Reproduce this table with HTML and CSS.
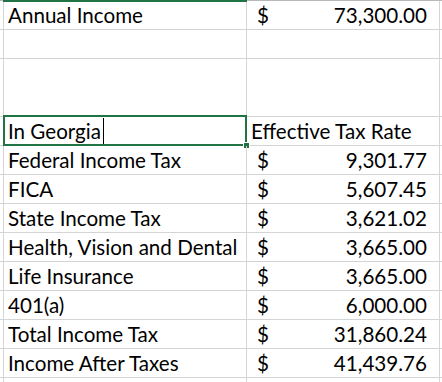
FILE: index.html
```
<!DOCTYPE html>
<html>
<head>
<meta charset="utf-8">
<link rel="stylesheet" href="styles.css">
</head>
<body>
<div class="sheet">
  <div class="row">
    <div class="stub"></div>
    <div class="cell label top-sel">Annual Income</div>
    <div class="cell money"><span class="cur">$</span><span class="num">73,300.00</span></div>
    <div class="rest"></div>
  </div>
  <div class="row">
    <div class="stub"></div><div class="cell label"></div><div class="cell money"></div><div class="rest"></div>
  </div>
  <div class="row tall">
    <div class="stub"></div><div class="cell label"></div><div class="cell money"></div><div class="rest"></div>
  </div>
  <div class="row">
    <div class="stub"></div>
    <div class="cell label active">In Georgia<span class="caret"></span><span class="selbox"><span class="handle"></span></span></div>
    <div class="cell heading">Effective Tax Rate</div>
    <div class="rest"></div>
  </div>
  <div class="row">
    <div class="stub"></div>
    <div class="cell label">Federal Income Tax</div>
    <div class="cell money"><span class="cur">$</span><span class="num">9,301.77</span></div>
    <div class="rest"></div>
  </div>
  <div class="row">
    <div class="stub"></div>
    <div class="cell label">FICA</div>
    <div class="cell money"><span class="cur">$</span><span class="num">5,607.45</span></div>
    <div class="rest"></div>
  </div>
  <div class="row">
    <div class="stub"></div>
    <div class="cell label">State Income Tax</div>
    <div class="cell money"><span class="cur">$</span><span class="num">3,621.02</span></div>
    <div class="rest"></div>
  </div>
  <div class="row">
    <div class="stub"></div>
    <div class="cell label">Health, Vision and Dental</div>
    <div class="cell money"><span class="cur">$</span><span class="num">3,665.00</span></div>
    <div class="rest"></div>
  </div>
  <div class="row">
    <div class="stub"></div>
    <div class="cell label">Life Insurance</div>
    <div class="cell money"><span class="cur">$</span><span class="num">3,665.00</span></div>
    <div class="rest"></div>
  </div>
  <div class="row">
    <div class="stub"></div>
    <div class="cell label">401(a)</div>
    <div class="cell money"><span class="cur">$</span><span class="num">6,000.00</span></div>
    <div class="rest"></div>
  </div>
  <div class="row">
    <div class="stub"></div>
    <div class="cell label">Total Income Tax</div>
    <div class="cell money"><span class="cur">$</span><span class="num">31,860.24</span></div>
    <div class="rest"></div>
  </div>
  <div class="row">
    <div class="stub"></div>
    <div class="cell label">Income After Taxes</div>
    <div class="cell money"><span class="cur">$</span><span class="num">41,439.76</span></div>
    <div class="rest"></div>
  </div>
  <div class="row tail">
    <div class="stub"></div><div class="cell label"></div><div class="cell money"></div><div class="rest"></div>
  </div>
</div>
</body>
</html>
```
FILE: styles.css
```
* { box-sizing: border-box; }
html, body { margin: 0; padding: 0; background: #fff; }
body { width: 442px; height: 382px; overflow: hidden; }
.sheet {
  border-top: 1px solid #b8b8b8;
  font-family: Lato, "Open Sans", sans-serif;
  font-size: 20.6px;
  color: #000;
}
.row {
  display: flex;
  height: 29px;
  border-bottom: 1px solid #d4d4d4;
}
.row.tall { height: 58px; }
.row.tail { height: 4px; border-bottom: 0; }
.stub { width: 4px; border-right: 1px solid #d4d4d4; flex: none; }
.cell {
  flex: none;
  display: flex;
  align-items: flex-end;
  border-right: 1px solid #d4d4d4;
  line-height: 22px;
  padding-bottom: 3px;
  white-space: nowrap;
  position: relative;
}
.rest { flex: 1; }
.label { width: 243px; padding-left: 4px; }
.money { width: 193px; padding-left: 10px; padding-right: 12px; justify-content: space-between; }
.heading { width: 193px; padding-left: 4px; }
.top-sel::before {
  content: "";
  position: absolute;
  left: -1px;
  top: -1px;
  width: 244px;
  height: 2px;
  background: #217346;
}
.caret {
  display: inline-block;
  width: 1px;
  height: 26px;
  background: #000;
  margin-left: 2px;
  align-self: flex-end;
  margin-bottom: -2px;
}
.selbox {
  position: absolute;
  left: -1px;
  top: -2px;
  width: 244px;
  height: 31px;
  border: 2px solid #217346;
}
.handle {
  position: absolute;
  right: -5px;
  bottom: -5px;
  width: 7px;
  height: 7px;
  background: #217346;
  border: 1px solid #fff;
}
```
